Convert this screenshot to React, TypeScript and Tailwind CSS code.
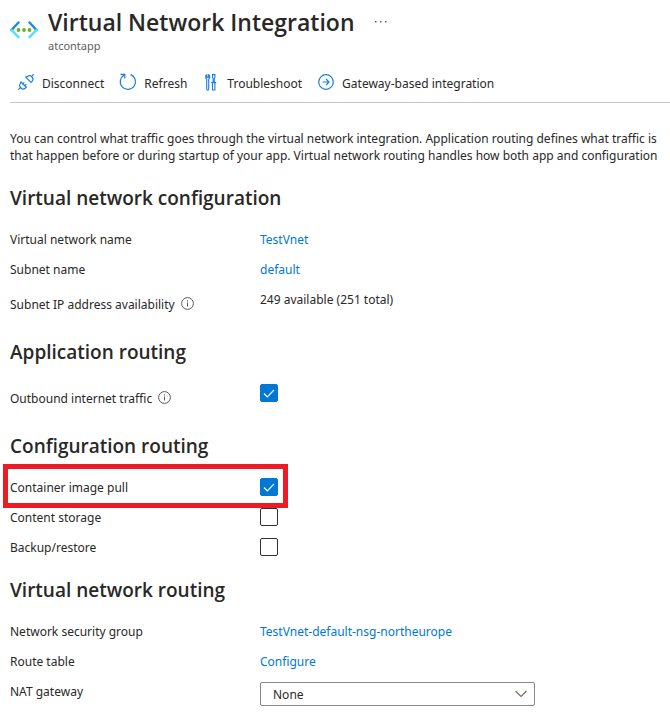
import type { ReactNode } from 'react';
import { useState } from 'react';

function VNetLogo() {
  return (
    <svg width="28" height="18" viewBox="0 0 28 18" fill="none" aria-hidden="true">
      <path d="M8.5 1.5 1.5 9" stroke="#1e88dc" strokeWidth="2.4" strokeLinecap="round" />
      <path d="M1.5 9l7 7.2" stroke="#4fe0fb" strokeWidth="2.4" strokeLinecap="round" />
      <path d="M19.5 1.5l7 7.5" stroke="#1e88dc" strokeWidth="2.4" strokeLinecap="round" />
      <path d="M26.5 9l-7 7.2" stroke="#4fe0fb" strokeWidth="2.4" strokeLinecap="round" />
      <circle cx="8.5" cy="9" r="1.9" fill="#6bb126" />
      <circle cx="14" cy="9" r="1.9" fill="#6bb126" />
      <circle cx="19.5" cy="9" r="1.9" fill="#6bb126" />
    </svg>
  );
}

function DisconnectIcon() {
  return (
    <svg width="16" height="16" viewBox="0 0 16 16" fill="none" stroke="#1a7fd9" strokeWidth="1.2" aria-hidden="true">
      <path d="M.3 15.7l2.5-2.5M13.2 2.8 15.7.3M6.3 8.3 4.9 9.7M8.2 10.2 6.8 11.6" />
      <path d="M3 8l5.3 5.3-1.1 1c-1.3 1-3.1.9-4.3-.3-1.3-1.2-1.4-3.2-.6-4.5z" />
      <path d="M7.8 3.1l5.2 5.2 1-1c1.2-1.3 1.1-3.2-.1-4.4-1.3-1.3-3.3-1.4-4.6-.3z" />
    </svg>
  );
}

function RefreshIcon() {
  return (
    <svg
      width="18"
      height="18"
      viewBox="0 0 18 18"
      fill="none"
      stroke="#1a7fd9"
      strokeWidth="1.2"
      className="shrink-0"
      aria-hidden="true"
    >
      <path d="M11.5 1.6A7.6 7.6 0 1 1 5.4 2" />
      <path d="M1.5 1.3h4.3v4.3" />
    </svg>
  );
}

function TroubleshootIcon() {
  return (
    <svg width="12" height="17" viewBox="0 0 12 17" fill="none" stroke="#1a7fd9" strokeWidth="1.1" aria-hidden="true">
      <path d="M1.8.8C1 1.2.6 2 .6 2.9c0 .9.4 1.6 1.1 2v10c0 .8.4 1.2 1 1.2s1-.4 1-1.2v-10c.8-.4 1.1-1.1 1.1-2 0-.9-.4-1.7-1.2-2.1v2.3H1.8z" />
      <path d="M7.5.6h2.4v2.8l-.6 1.2v4H8.1v-4l-.6-1.2zM6.2 8.6h5M7.5 8.6V16h2.4V8.6" />
    </svg>
  );
}

function GatewayIcon() {
  return (
    <svg width="16" height="16" viewBox="0 0 16 16" fill="none" stroke="#1a7fd9" strokeWidth="1.2" aria-hidden="true">
      <circle cx="8" cy="8" r="7.3" />
      <path d="M4.5 8H11M8 5l3 3-3 3" />
    </svg>
  );
}

function InfoIcon() {
  return (
    <svg
      width="13"
      height="13"
      viewBox="0 0 13 13"
      fill="none"
      stroke="#484644"
      strokeWidth=".9"
      className="mb-0.5"
      aria-hidden="true"
    >
      <circle cx="6.5" cy="6.5" r="5.9" />
      <path d="M6.5 5.5v4M6.5 3.3v1.2" />
    </svg>
  );
}

function Command({ icon, label }: { icon: ReactNode; label: string }) {
  return (
    <button type="button" className="flex items-center gap-2 whitespace-nowrap">
      <span className="flex w-4 justify-center pb-0.5">{icon}</span>
      {label}
    </button>
  );
}

function Section({ title, children }: { title: string; children: ReactNode }) {
  return (
    <section>
      <h2 className="pt-3.5 pb-3 font-['Segoe_UI','Open_Sans',sans-serif] text-[19px] leading-7 font-semibold">
        {title}
      </h2>
      {children}
    </section>
  );
}

function LinkRow({ label, text }: { label: string; text: string }) {
  return (
    <div className="flex h-[30px] items-center">
      <span className="w-[250px] shrink-0">{label}</span>
      <a href="#" className="text-[#0078d4]">
        {text}
      </a>
    </div>
  );
}

interface CheckRowProps {
  id: string;
  label: string;
  initial?: boolean;
  info?: boolean;
  highlighted?: boolean;
}

function CheckRow({ id, label, initial = false, info = false, highlighted = false }: CheckRowProps) {
  const [checked, setChecked] = useState(initial);

  return (
    <div className="relative flex items-start">
      <label
        htmlFor={id}
        className={`flex w-[250px] shrink-0 items-center gap-1.5 ${info ? 'h-10' : 'h-[30px]'}`}
      >
        {label}
        {info && <InfoIcon />}
      </label>
      <span className="grid h-[30px] place-items-center">
        <input
          id={id}
          type="checkbox"
          checked={checked}
          onChange={(e) => setChecked(e.target.checked)}
          className="peer col-start-1 row-start-1 size-[18px] appearance-none rounded-xs border border-[#323130] bg-white checked:border-[#0078d4] checked:bg-[#0078d4]"
        />
        <svg
          width="12"
          height="10"
          viewBox="0 0 12 10"
          fill="none"
          stroke="white"
          strokeWidth="1.2"
          className="pointer-events-none col-start-1 row-start-1 hidden peer-checked:block"
          aria-hidden="true"
        >
          <path d="M1 5.5l3.3 3.3L11 2" />
        </svg>
      </span>
      {highlighted && (
        <span className="pointer-events-none absolute -top-2 -bottom-1.5 -left-[7px] w-[285px] border-5 border-[#ed1c24]" />
      )}
    </div>
  );
}

export default function App() {
  return (
    <main className="overflow-hidden bg-white px-2.5 font-['Segoe_UI','Noto_Sans',sans-serif] text-[12px] leading-[17px] text-[#292827]">
      <header className="flex items-start pt-1.5">
        <div className="w-[38px] shrink-0 pt-[15px]">
          <VNetLogo />
        </div>
        <div>
          <h1 className="font-['Segoe_UI','Open_Sans',sans-serif] text-[23px] leading-8 font-semibold">
            Virtual Network Integration
          </h1>
          <p className="text-[11px] leading-4 text-[#605e5c]">atcontapp</p>
        </div>
        <button type="button" aria-label="More actions" className="ml-5 pt-[14px]">
          <svg width="12" height="3" viewBox="0 0 12 3" fill="#605e5c" aria-hidden="true">
            <path d="M0 1h1.5v1.5H0zM5 1h1.5v1.5H5zM10 1h1.5v1.5H10z" />
          </svg>
        </button>
      </header>

      <div className="-mr-2.5 flex h-[49px] items-center gap-4 border-b border-[#c8c6c4] pt-2.5 pl-2">
        <Command icon={<DisconnectIcon />} label="Disconnect" />
        <Command icon={<RefreshIcon />} label="Refresh" />
        <Command icon={<TroubleshootIcon />} label="Troubleshoot" />
        <Command icon={<GatewayIcon />} label="Gateway-based integration" />
      </div>

      <p className="pt-[27px] pb-1.5 whitespace-nowrap">
        You can control what traffic goes through the virtual network integration. Application routing defines what traffic is
        <br />
        that happen before or during startup of your app. Virtual network routing handles how both app and configuration
      </p>

      <Section title="Virtual network configuration">
        <LinkRow label="Virtual network name" text="TestVnet" />
        <LinkRow label="Subnet name" text="default" />
        <div className="flex items-start">
          <span className="flex h-10 w-[250px] shrink-0 items-center gap-1.5">
            Subnet IP address availability
            <InfoIcon />
          </span>
          <span className="flex h-[30px] items-center">249 available (251 total)</span>
        </div>
      </Section>

      <Section title="Application routing">
        <CheckRow id="outbound" label="Outbound internet traffic" initial info />
      </Section>

      <Section title="Configuration routing">
        <CheckRow id="image-pull" label="Container image pull" initial highlighted />
        <CheckRow id="content-storage" label="Content storage" />
        <CheckRow id="backup" label="Backup/restore" />
      </Section>

      <Section title="Virtual network routing">
        <LinkRow label="Network security group" text="TestVnet-default-nsg-northeurope" />
        <LinkRow label="Route table" text="Configure" />
        <div className="flex items-start">
          <label htmlFor="nat" className="flex h-[30px] w-[250px] shrink-0 items-center">
            NAT gateway
          </label>
          <div className="grid w-[275px] items-center pt-1.5">
            <select
              id="nat"
              className="col-start-1 row-start-1 h-6 appearance-none rounded-xs border border-[#8a8886] bg-white px-3"
            >
              <option>None</option>
            </select>
            <svg
              width="12"
              height="8"
              viewBox="0 0 12 8"
              fill="none"
              stroke="#7d6a60"
              strokeWidth="1.2"
              className="pointer-events-none col-start-1 row-start-1 mr-2 justify-self-end"
              aria-hidden="true"
            >
              <path d="M.5 1L6 6.500 11.500 1" />
            </svg>
          </div>
        </div>
      </Section>
    </main>
  );
}
